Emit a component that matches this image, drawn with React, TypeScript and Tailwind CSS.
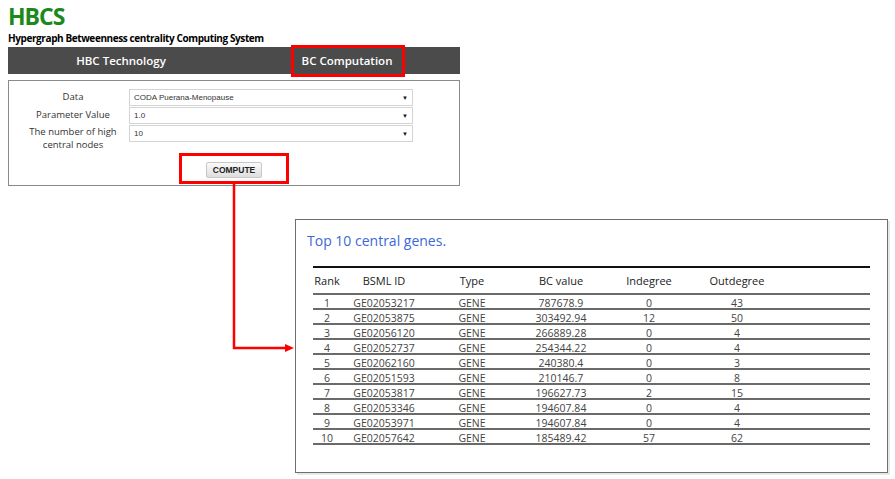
import React from 'react'

const rows = [
  ['1', 'GE02053217', 'GENE', '787678.9', '0', '43'],
  ['2', 'GE02053875', 'GENE', '303492.94', '12', '50'],
  ['3', 'GE02056120', 'GENE', '266889.28', '0', '4'],
  ['4', 'GE02052737', 'GENE', '254344.22', '0', '4'],
  ['5', 'GE02062160', 'GENE', '240380.4', '0', '3'],
  ['6', 'GE02051593', 'GENE', '210146.7', '0', '8'],
  ['7', 'GE02053817', 'GENE', '196627.73', '2', '15'],
  ['8', 'GE02053346', 'GENE', '194607.84', '0', '4'],
  ['9', 'GE02053971', 'GENE', '194607.84', '0', '4'],
  ['10', 'GE02057642', 'GENE', '185489.42', '57', '62'],
]

const cols = 'grid grid-cols-[28px_86px_90px_88px_88px_88px_1fr]'

const Select = ({ value }: { value: string }) => (
  <div className="flex items-center justify-between h-[17px] w-[284px] border border-[#d4d4d4] bg-white pl-[4px] pr-[4px] text-[8px] text-[#333] font-['Liberation_Sans',sans-serif]">
    <span>{value}</span>
    <span className="text-[6px] leading-none text-[#111]">▼</span>
  </div>
)

const App = () => {
  return (
    <div className="relative w-[895px] h-[479px] bg-white overflow-hidden font-['Open_Sans',sans-serif] flex flex-col">
      {/* top: header + computation form */}
      <div className="ml-2 w-[452px] flex flex-col">
        <h1 className="text-[23px] leading-[30px] font-bold text-[#1b8a1b] tracking-[-1px] mt-[1px]">HBCS</h1>
        <p className="text-[10px] leading-[14px] font-bold text-black tracking-[-0.4px]">
          Hypergraph Betweenness centrality Computing System
        </p>
        <div className="mt-[2px] h-[27px] bg-[#4b4b4b] grid grid-cols-2 text-white text-[11.5px] font-semibold">
          <div className="flex items-center justify-center">HBC Technology</div>
          <div className="flex items-center justify-center">
            <span className="relative leading-[16px]">
              BC Computation
              <span className="absolute left-[-11px] right-[-13px] top-[-8px] bottom-[-8px] border-[3px] border-[#ff0000]" />
            </span>
          </div>
        </div>

        <div className="mt-[6px] h-[106px] border border-[#8a8a8a] flex flex-col pt-[8px]">
          <div className="flex flex-col gap-[1px] text-[9.5px] text-[#333]">
            <div className="flex items-center">
              <div className="w-[120px] pl-[8px] text-center">Data</div>
              <Select value="CODA Puerana-Menopause" />
            </div>
            <div className="flex items-center">
              <div className="w-[120px] pl-[8px] text-center">Parameter Value</div>
              <Select value="1.0" />
            </div>
            <div className="flex items-start">
              <div className="w-[120px] pl-[8px] text-center leading-[12.5px] pt-[1px]">
                The number of high
                <br />
                central nodes
              </div>
              <Select value="10" />
            </div>
          </div>
          <div className="flex justify-center mt-[11px]">
            <span className="relative">
              <button className="block h-[16px] w-[56px] border border-[#c8c8c8] rounded-[2px] bg-gradient-to-b from-[#fafafa] to-[#dedede] text-[8.5px] font-bold text-[#222] font-['Liberation_Sans',sans-serif]">
                COMPUTE
              </button>
              <span className="absolute left-[-27px] right-[-27px] top-[-9px] bottom-[-6px] border-[3px] border-[#ff0000]" />
            </span>
          </div>
        </div>
      </div>

      {/* result panel */}
      <div className="ml-[295px] mt-[33px] w-[593px] h-[254px] border-[1.5px] border-[#6e6e6e] shadow-[2px_2px_0_#e8e8e8] pt-[11px]">
        <h2 className="pl-[11px] text-[14px] leading-[20px] text-[#3a68d8]">Top 10 central genes.</h2>
        <div className="ml-[17px] mt-[15px] w-[557px] border-t-2 border-[#111]">
          <div className={`${cols} h-[27px] pt-[2px] items-center border-b-2 border-[#6a6a6a] text-[11px] text-[#222]`}>
            <div className="text-center">Rank</div>
            <div className="text-center">BSML ID</div>
            <div className="text-center">Type</div>
            <div className="text-center">BC value</div>
            <div className="text-center">Indegree</div>
            <div className="text-center">Outdegree</div>
            <div />
          </div>
          {rows.map((r) => (
            <div key={r[0]} className={`${cols} h-[15px] pt-[2px] items-start border-b-2 border-[#6a6a6a] text-[10.5px] leading-[13px] text-[#444]`}>
              {r.map((c, i) => (
                <div key={i} className="text-center">{c}</div>
              ))}
              <div />
            </div>
          ))}
        </div>
      </div>

      {/* arrow from COMPUTE to the result panel */}
      <svg className="absolute left-0 top-0 pointer-events-none" width="895" height="479">
        <polyline points="234,184 234,348 287,348" fill="none" stroke="#ff0000" strokeWidth="2.5" />
        <polygon points="285,344 294,348 285,352" fill="#ff0000" />
      </svg>
    </div>
  )
}

export default App
